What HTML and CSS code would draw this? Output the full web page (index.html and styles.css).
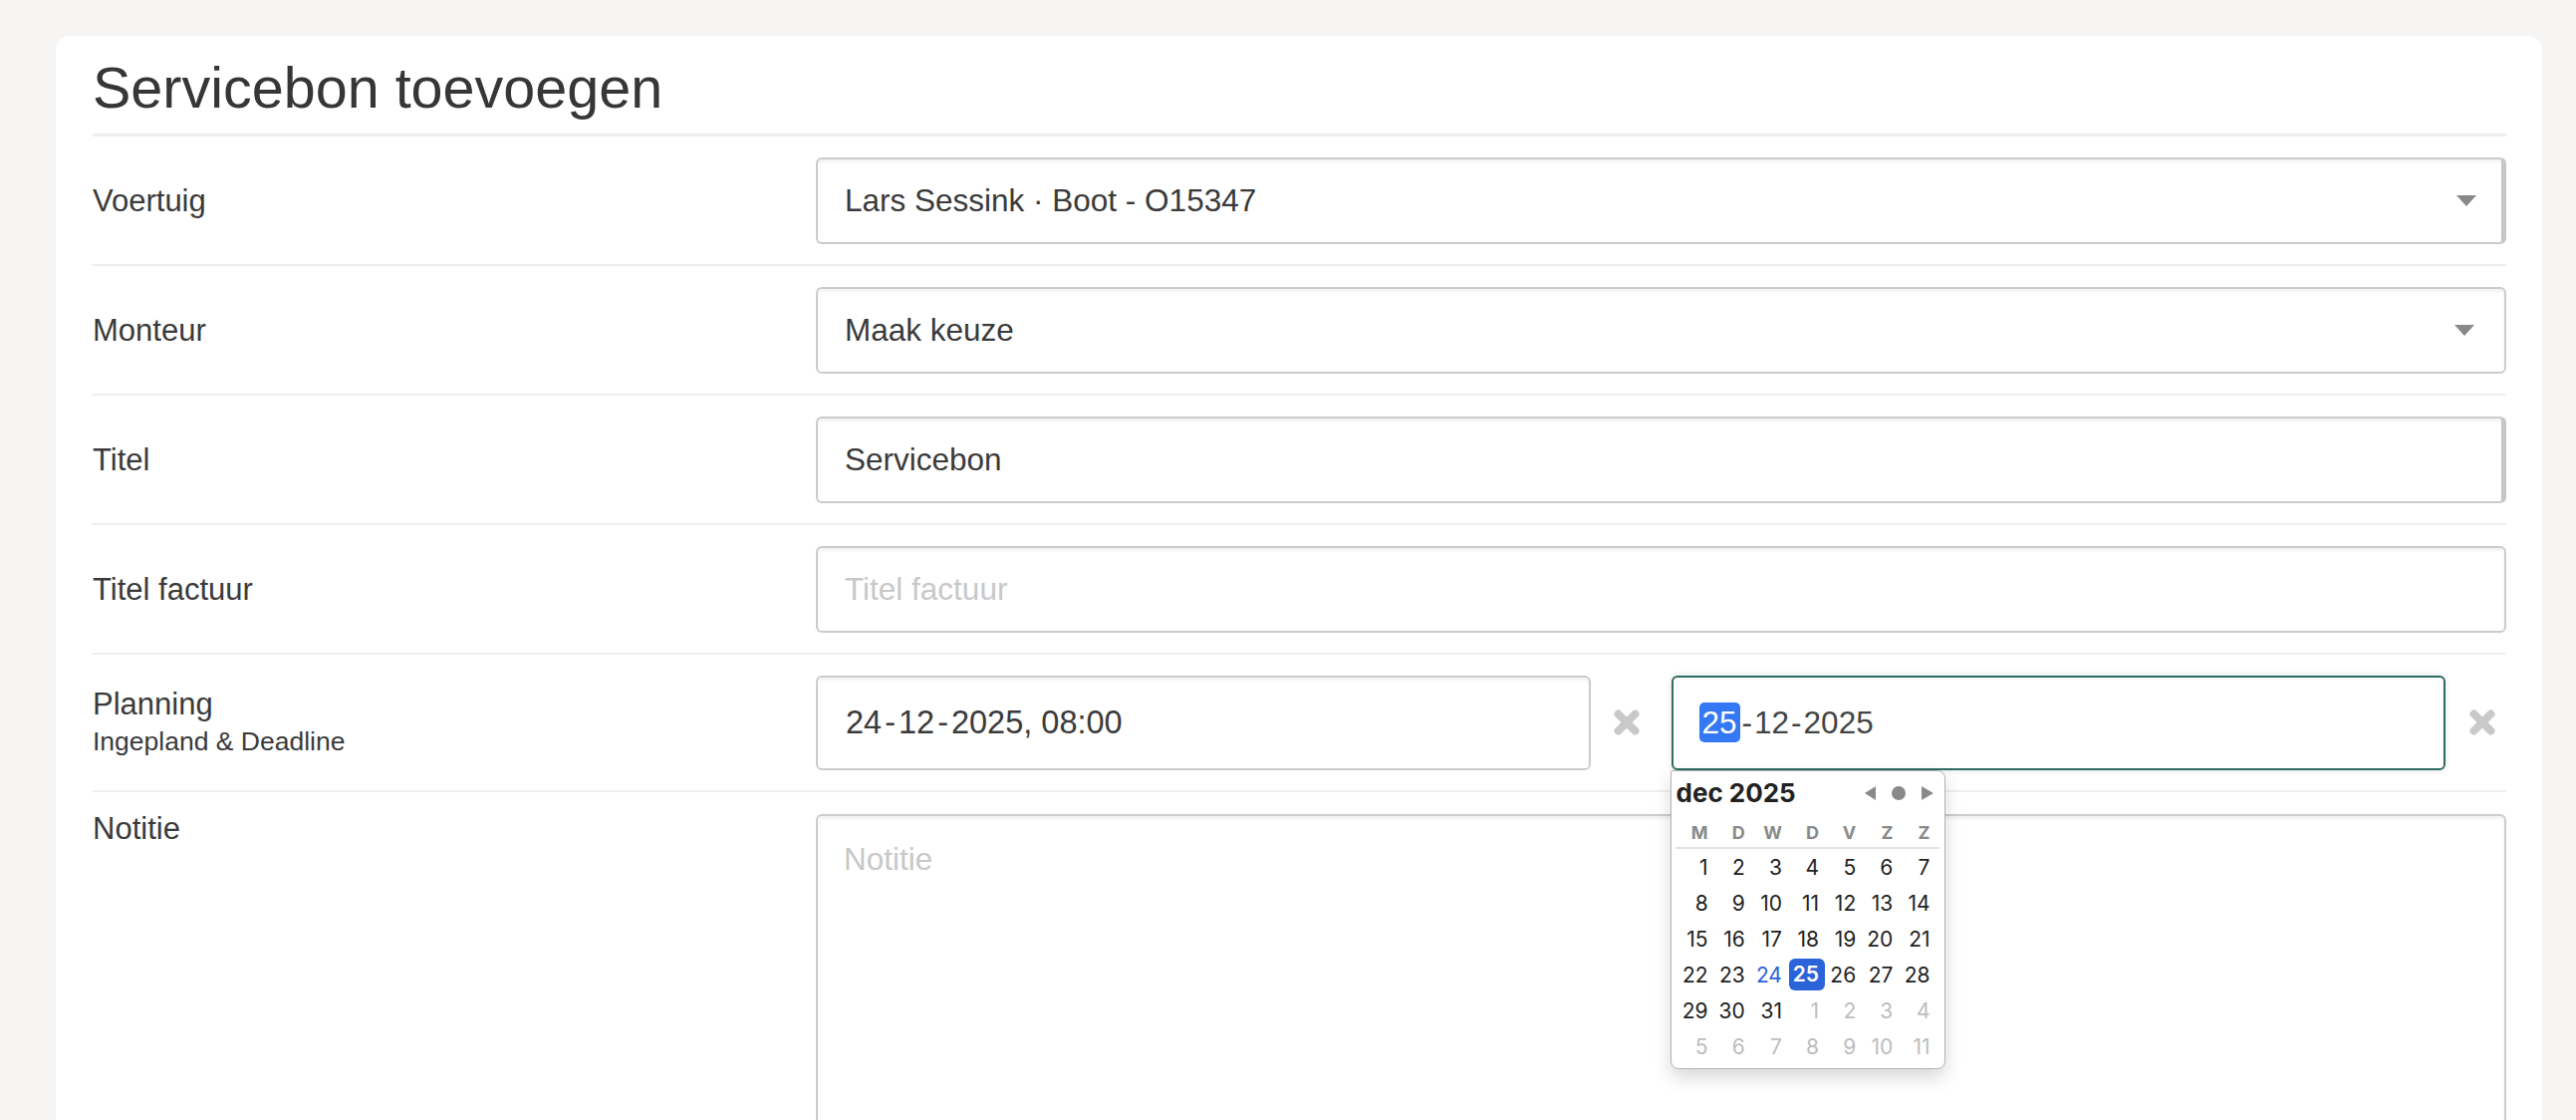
FILE: index.html
```html
<!DOCTYPE html>
<html lang="nl">
<head>
  <meta charset="UTF-8" />
  <title>Servicebon toevoegen</title>
  <link rel="stylesheet" href="styles.css">
</head>
<body>
  <div class="page">
    <div class="card">
      <h1>Servicebon toevoegen</h1>

      <div class="row">
        <label class="label">Voertuig</label>
        <div class="field select bar">
          <span class="choice">Lars Sessink · Boot - O15347</span>
          <span class="caret"></span>
        </div>
      </div>

      <div class="row">
        <label class="label">Monteur</label>
        <div class="field select">
          <span class="choice">Maak keuze</span>
          <span class="caret"></span>
        </div>
      </div>

      <div class="row">
        <label class="label">Titel</label>
        <input class="field bar" value="Servicebon" />
      </div>

      <div class="row">
        <label class="label">Titel factuur</label>
        <input class="field" placeholder="Titel factuur" />
      </div>

      <div class="row planning">
        <label class="label">Planning<small>Ingepland &amp; Deadline</small></label>
        <div class="dates">
          <div class="date-wrap">
            <div class="date-field">24<span class="sep">-</span>12<span class="sep">-</span>2025,&nbsp;08:00</div>
          </div>
          <span class="clear">
            <svg viewBox="0 0 28 28" width="28" height="28"><path d="M5.5 5.5 L22.5 22.5 M22.5 5.5 L5.5 22.5" /></svg>
          </span>
          <div class="date-wrap">
            <div class="date-field focus"><span class="sel">25</span><span class="sep">-</span>12<span class="sep">-</span>2025</div>

            <!-- datumkiezer -->
            <div class="picker">
              <div class="picker-head">
                <span class="month">dec 2025</span>
                <span class="nav">
                  <span class="prev"></span>
                  <span class="dot"></span>
                  <span class="next"></span>
                </span>
              </div>
              <div class="weekdays">
                <span>M</span><span>D</span><span>W</span><span>D</span><span>V</span><span>Z</span><span>Z</span>
              </div>
              <div class="rule"></div>
              <div class="days" id="days"></div>
            </div>
          </div>
          <span class="clear">
            <svg viewBox="0 0 28 28" width="28" height="28"><path d="M5.5 5.5 L22.5 22.5 M22.5 5.5 L5.5 22.5" /></svg>
          </span>
        </div>
      </div>

      <div class="row notes">
        <label class="label">Notitie</label>
        <textarea class="field" placeholder="Notitie"></textarea>
      </div>
    </div>
  </div>

  <script>
    const days = document.getElementById('days');
    for (let i = 0; i < 42; i++) {
      const cell = document.createElement('span');
      let n = i + 1;
      if (n > 31) {
        n = n - 31;
        cell.className = 'other';
      }
      if (i === 23) cell.className = 'today';
      if (i === 24) cell.className = 'selected';
      cell.textContent = n;
      days.appendChild(cell);
    }
  </script>
</body>
</html>
```

FILE: styles.css
```css
* {
  box-sizing: border-box;
}

body {
  margin: 0;
  background: #f6f5f3;
  font-family: "Liberation Sans", Arial, Helvetica, sans-serif;
  color: #3a3a3a;
  overflow: hidden;
}

.page {
  padding: 36px 34px 0 56px;
  height: 100vh;
}

.card {
  background: #fff;
  border-radius: 14px 14px 0 0;
  padding: 21px 36px 0 37px;
  min-height: 1100px;
}

h1 {
  margin: 0;
  font-size: 57.5px;
  line-height: 62.7px;
  font-weight: 400;
  color: #363636;
  padding-bottom: 14px;
  border-bottom: 3px solid #eee;
}

.row {
  display: grid;
  grid-template-columns: 726px 1fr;
  align-items: center;
  padding: 21px 0 20px;
  border-bottom: 2px solid #eee;
}

.label {
  display: block;
  font-size: 31px;
  line-height: 1.4;
  color: #3a3a3a;
}

.label small {
  display: block;
  font-size: 26.5px;
  line-height: 30px;
}

.field {
  width: 100%;
  height: 87px;
  margin: 0;
  padding: 0 27px;
  background: #fff;
  border: 2px solid #ccc;
  border-radius: 6px;
  box-shadow: inset 0 3px 3px rgba(0,0,0,0.05);
  font-family: inherit;
  font-size: 31.5px;
  color: #3a3a3a;
  outline: none;
}

.field::placeholder {
  color: #c8c8c8;
}

.bar {
  border-right: 5px solid #c6c6c6;
}

.select {
  display: flex;
  align-items: center;
  justify-content: space-between;
  padding-right: 30px;
}

.select.bar {
  padding-right: 25px;
}

.choice {
  white-space: nowrap;
}

.caret {
  width: 0;
  height: 0;
  border-left: 10px solid transparent;
  border-right: 10px solid transparent;
  border-top: 11px solid #888;
}

/* planning */

.planning .label {
  align-self: start;
  margin-top: 7.5px;
}

.dates {
  display: flex;
  align-items: center;
}

.date-wrap {
  flex: 1;
  position: relative;
}

.clear {
  width: 61px;
  padding-left: 12px;
  display: flex;
  justify-content: center;
}

.clear + .date-wrap {
  margin-left: 20px;
}

.clear svg path {
  stroke: #c9c9c9;
  stroke-width: 8;
  stroke-linecap: round;
  fill: none;
}

.date-field {
  height: 95px;
  display: flex;
  align-items: center;
  padding-left: 28px;
  border: 2px solid #ccc;
  border-radius: 6px;
  box-shadow: inset 0 3px 3px rgba(0,0,0,0.05);
  font-size: 32.5px;
  color: #3a3a3a;
  white-space: nowrap;
}

.date-field .sep {
  margin: 0 3px;
}

.date-field.focus {
  border-color: #2e6b63;
  padding-left: 26px;
  font-size: 31.5px;
  color: #444;
  box-shadow: 0 0 6px rgba(0,0,0,0.12);
}

.date-field.focus .sep {
  margin: 0 2px;
}

.sel {
  background: #3478f6;
  color: #fff;
  border-radius: 5px;
  padding: 0 3px;
  line-height: 40px;
}

.picker {
  position: absolute;
  left: -1px;
  top: 100%;
  width: 276px;
  padding: 2px 11px 3px 3px;
  background: #fff;
  border: 1px solid #b3b3b3;
  border-radius: 2px 8px 8px 8px;
  box-shadow: 0 8px 18px rgba(0,0,0,0.16);
  font-family: Inter, "Liberation Sans", sans-serif;
  z-index: 5;
}

.picker-head {
  display: flex;
  align-items: center;
  justify-content: space-between;
  height: 40px;
}

.month {
  margin-left: 2px;
  font-size: 26px;
  font-weight: 700;
  color: #222;
}

.nav {
  display: flex;
  align-items: center;
  gap: 16px;
}

.prev {
  border-top: 7px solid transparent;
  border-bottom: 7px solid transparent;
  border-right: 11px solid #8a8a8a;
}

.next {
  border-top: 7px solid transparent;
  border-bottom: 7px solid transparent;
  border-left: 12px solid #8a8a8a;
}

.dot {
  width: 14px;
  height: 14px;
  border-radius: 50%;
  background: #8a8a8a;
}

.weekdays,
.days {
  display: grid;
  grid-template-columns: repeat(7, 1fr);
}

.weekdays {
  margin-top: 6.5px;
  font-size: 18px;
  font-weight: 700;
  line-height: 28px;
  color: #8a8a8a;
}

.weekdays span,
.days span {
  text-align: right;
  padding-right: 3px;
}

.rule {
  height: 2px;
  margin-right: -6px;
  margin-left: 1px;
  background: #e3e3e3;
}

.days {
  margin-top: 1px;
  font-size: 21px;
  line-height: 36px;
  color: #222;
}

.days .other {
  color: #bdbdbd;
}

.days .today {
  color: #2b63d9;
}

.days .selected {
  margin: 1px -3px 3px 4px;
  padding-right: 6px;
  line-height: 32px;
  background: #2b63d9;
  color: #fff;
  font-weight: 600;
  border-radius: 6px;
}

/* notitie */

.notes {
  padding-top: 22px;
  border-bottom: none;
}

.notes .label {
  align-self: start;
  margin-top: -6.5px;
}

.notes textarea {
  height: 420px;
  padding: 21px 26px;
  line-height: 1.42857;
  resize: none;
}
```
